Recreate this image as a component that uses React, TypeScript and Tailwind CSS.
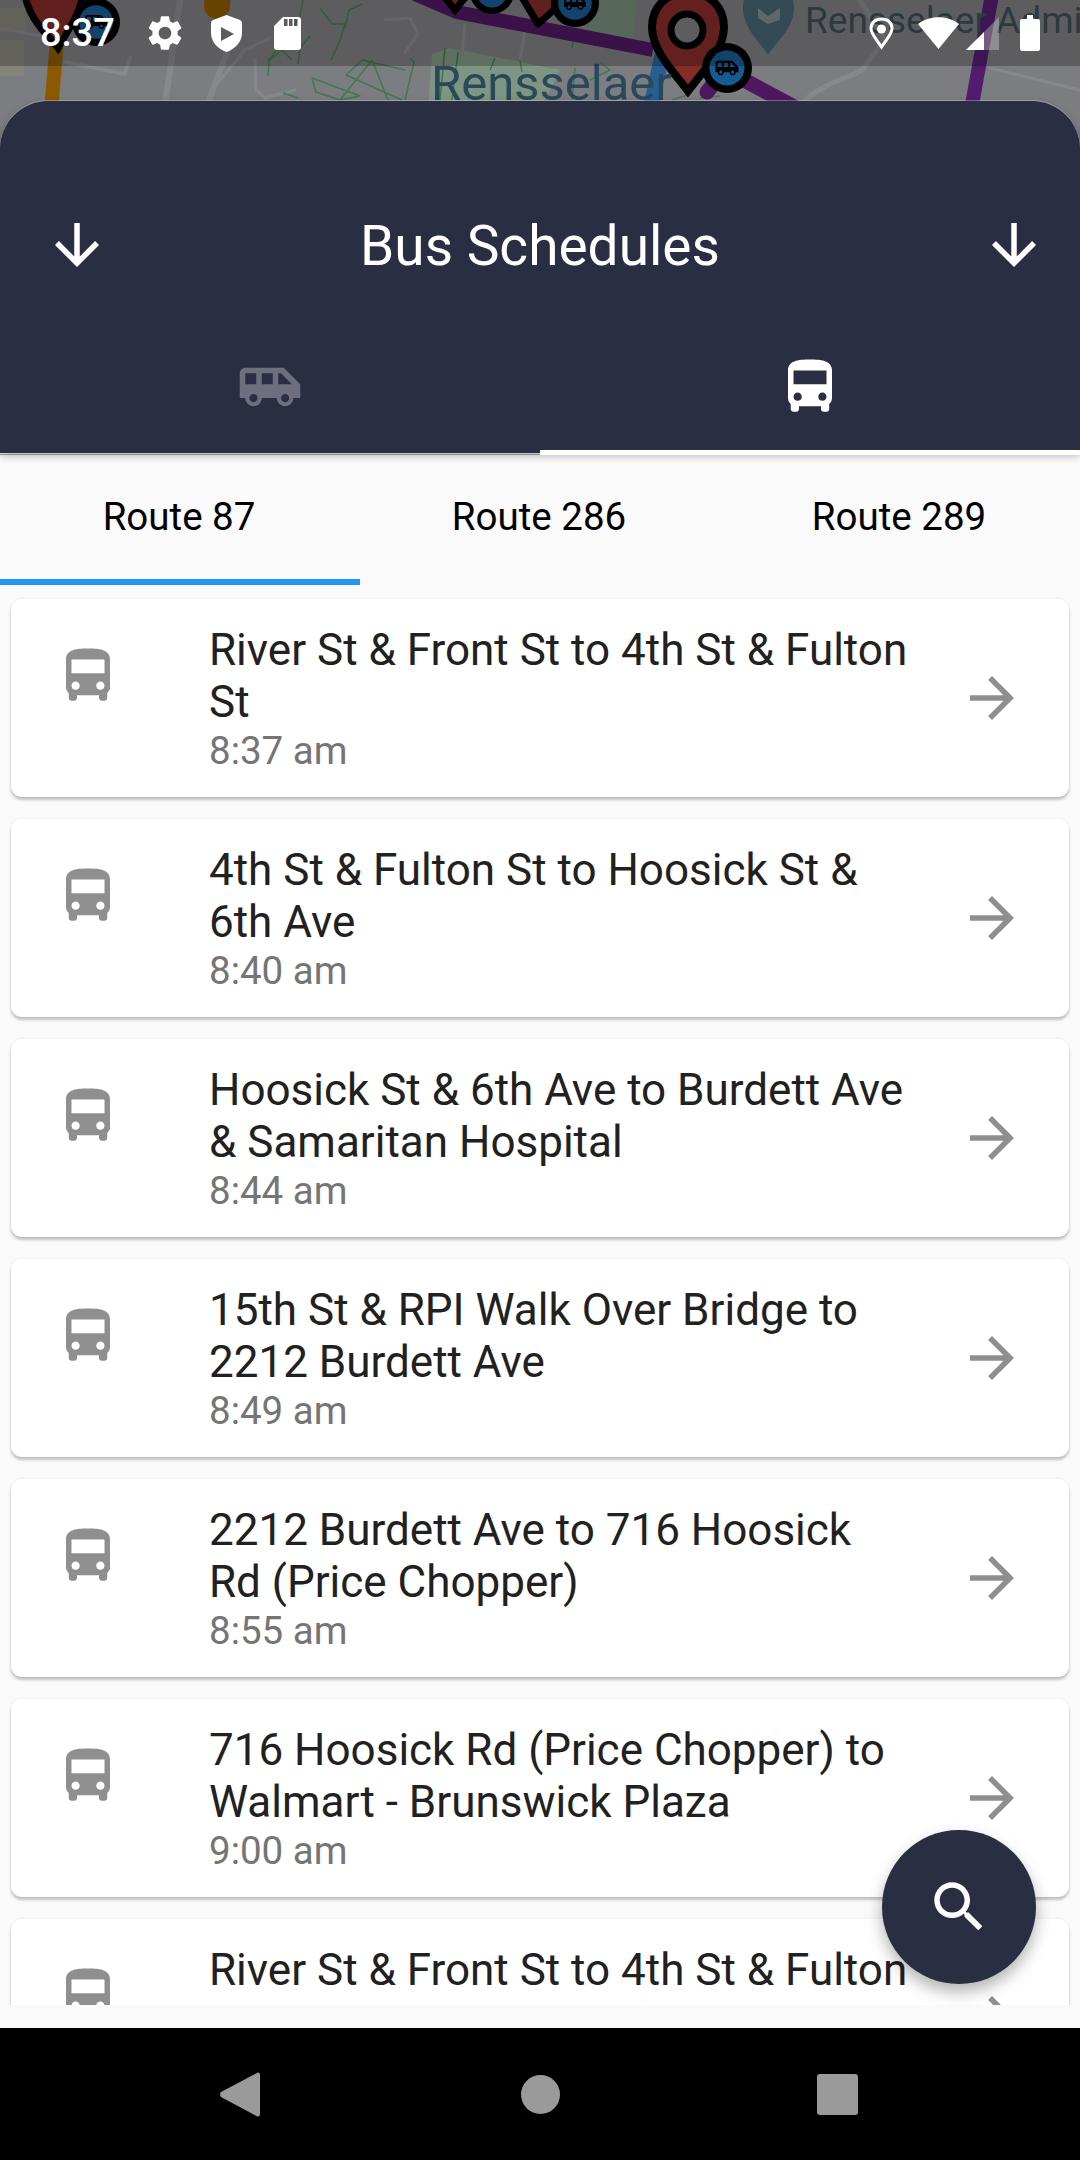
const navy = "bg-[#2a2e43]";

const busPath =
  "M4 16c0 .88.39 1.67 1 2.22V20c0 .55.45 1 1 1h1c.55 0 1-.45 1-1v-1h8v1c0 .55.45 1 1 1h1c.55 0 1-.45 1-1v-1.78c.61-.55 1-1.34 1-2.22V6c0-3.5-3.58-4-8-4s-8 .5-8 4v10zm3.5 1c-.83 0-1.5-.67-1.5-1.5S6.67 14 7.5 14s1.5.67 1.5 1.5S8.33 17 7.5 17zm9 0c-.83 0-1.5-.67-1.5-1.5s.67-1.5 1.5-1.5 1.5.67 1.5 1.5-.67 1.5-1.5 1.5zm1.5-6H6V6h12v5z";
const shuttlePath =
  "M17 5H3c-1.1 0-2 .89-2 2v9h2c0 1.65 1.34 3 3 3s3-1.35 3-3h5.5c0 1.65 1.34 3 3 3s3-1.35 3-3H23v-5l-6-6zM3 11V7h4v4H3zm3 6.5c-.83 0-1.5-.67-1.5-1.5s.67-1.5 1.5-1.5 1.5.67 1.5 1.5-.67 1.5-1.5 1.5zM13 11H9V7h4v4zm4.5 6.5c-.83 0-1.5-.67-1.5-1.5s.67-1.5 1.5-1.5 1.5.67 1.5 1.5-.67 1.5-1.5 1.5zM15 11V7h1l4 4h-5z";
const settingsPath =
  "M19.14 12.94c.04-.3.06-.61.06-.94 0-.32-.02-.64-.07-.94l2.03-1.58c.18-.14.23-.41.12-.61l-1.92-3.32c-.12-.22-.37-.29-.59-.22l-2.39.96c-.5-.38-1.03-.7-1.62-.94l-.36-2.54c-.04-.24-.24-.41-.48-.41h-3.84c-.24 0-.43.17-.47.41l-.36 2.54c-.59.24-1.13.57-1.62.94l-2.39-.96c-.22-.08-.47 0-.59.22L2.74 8.87c-.12.21-.08.47.12.61l2.03 1.58c-.05.3-.09.63-.09.94s.02.64.07.94l-2.03 1.58c-.18.14-.23.41-.12.61l1.92 3.32c.12.22.37.29.59.22l2.39-.96c.5.38 1.03.7 1.62.94l.36 2.54c.05.24.24.41.48.41h3.84c.24 0 .44-.17.47-.41l.36-2.54c.59-.24 1.13-.56 1.62-.94l2.39.96c.22.08.47 0 .59-.22l1.92-3.32c.12-.22.07-.47-.12-.61l-2.01-1.58zM12 15.6c-1.98 0-3.6-1.62-3.6-3.6s1.62-3.6 3.6-3.6 3.6 1.62 3.6 3.6-1.62 3.6-3.6 3.6z";

function Icon(props: { d: string; className: string }) {
  return (
    <svg viewBox="0 0 24 24" className={props.className} fill="currentColor">
      <path d={props.d} />
    </svg>
  );
}

const stops = [
  { title: "River St & Front St to 4th St & Fulton St", time: "8:37 am" },
  { title: "4th St & Fulton St to Hoosick St & 6th Ave", time: "8:40 am" },
  { title: "Hoosick St & 6th Ave to Burdett Ave & Samaritan Hospital", time: "8:44 am" },
  { title: "15th St & RPI Walk Over Bridge to 2212 Burdett Ave", time: "8:49 am" },
  { title: "2212 Burdett Ave to 716 Hoosick Rd (Price Chopper)", time: "8:55 am" },
  { title: "716 Hoosick Rd (Price Chopper) to Walmart - Brunswick Plaza", time: "9:00 am" },
  { title: "River St & Front St to 4th St & Fulton St", time: "9:07 am" },
];

function BusBadge(props: { x: number; y: number; r: number }) {
  const s = props.r / 24;
  return (
    <g>
      <circle cx={props.x} cy={props.y} r={props.r} fill="#000" />
      <circle cx={props.x} cy={props.y} r={props.r * 0.7} fill="#175a92" />
      <g transform={`translate(${props.x - 12 * s}, ${props.y - 12 * s}) scale(${s})`}>
        <path d={shuttlePath} fill="#000" />
      </g>
    </g>
  );
}

function MapBackdrop() {
  return (
    <svg viewBox="0 0 1080 160" className="absolute left-0 top-0 h-[160px] w-[1080px]">
      <rect width="1080" height="160" fill="#7c7d80" />
      <rect x="0" y="8" width="25" height="24" fill="#858478" />
      <rect x="0" y="40" width="24" height="36" fill="#858478" />
      <polygon points="555,0 637,0 632,45 590,34" fill="#748a78" />
      <polygon points="432,54 450,48 560,70 540,110 428,110" fill="#7f9583" />
      <g fill="none" stroke="#87888b" strokeLinecap="round" strokeLinejoin="round">
        <path d="M180 0 L165 105" strokeWidth="6" />
        <path d="M228 50 L207 105" strokeWidth="6" />
        <path d="M66 62 L125 74 L130 58" strokeWidth="4" />
        <path d="M0 28 L30 34 L60 38" strokeWidth="3" />
        <path d="M212 90 L245 50 L270 38" strokeWidth="3" />
        <path d="M255 60 L256 90 L265 98 L295 90" strokeWidth="3" />
        <path d="M385 20 L410 18 L418 34 L405 52" strokeWidth="3" />
        <path d="M465 25 L462 55 M525 30 L520 60" strokeWidth="3" />
        <path d="M800 105 C830 75 860 80 868 62 L885 40 L860 0" strokeWidth="5" />
        <path d="M990 68 L1080 90" strokeWidth="3" />
      </g>
      <g fill="none" stroke="#3f7a4f" strokeWidth="1.5" strokeLinejoin="round">
        <path d="M303 0 L300 15 L290 33 L278 48 L269 60 L268 76" />
        <path d="M270 60 L282 50 L292 60" />
        <path d="M320 8 L332 24 L345 24 L340 40 L331 60" />
        <path d="M362 4 L349 10 L345 28" />
        <path d="M298 64 L300 48 L310 36" />
        <path d="M312 78 L360 96 L340 100 M312 78 L316 92 L340 100 L372 60 L388 100 M346 75 L402 100 M346 75 L362 60 L405 70 M283 93 L298 98" />
        <path d="M410 58 L414 62 L405 100" />
        <path d="M445 48 L440 100 M458 52 L452 100 M495 58 L490 70 M520 60 L522 72 M575 68 L572 100 M600 62 L610 70 L590 80" />
        <path d="M572 48 L573 40" />
        <path d="M672 100 L690 94 M700 98 L720 96" />
      </g>
      <path d="M51 110 L57 40" stroke="#8a5a00" strokeWidth="14" fill="none" />
      <path d="M218 -10 L217 6" stroke="#8a5a00" strokeWidth="26" strokeLinecap="round" fill="none" />
      <path d="M415 -6 L457 12 L653 50" stroke="#4e1860" strokeWidth="14" fill="none" />
      <path d="M662 55 L650 110" stroke="#245f96" strokeWidth="15" fill="none" />
      <path d="M707 92 L725 70 L800 110" stroke="#4e1860" strokeWidth="15" strokeLinecap="round" fill="none" />
      <path d="M992 -5 L971 110" stroke="#521c6e" strokeWidth="14" fill="none" />
      <path
        d="M24 -10 C28 20 48 35 58 48 C68 30 80 15 84 -10 Z"
        fill="#822b27"
        stroke="#000"
        strokeWidth="7"
      />
      <BusBadge x={96} y={22} r={24} />
      <path d="M442 -6 L455 10 L468 -6 Z" fill="#822b27" stroke="#000" strokeWidth="7" />
      <BusBadge x={492} y={-8} r={22} />
      <path d="M520 -6 L538 24 L556 8 L560 -6 Z" fill="#822b27" stroke="#000" strokeWidth="7" strokeLinejoin="round" />
      <BusBadge x={575} y={3} r={24} />
      <path
        d="M688 91 C672 70 652 50 652 27 C652 6 668 -8 688 -8 C708 -8 724 6 724 27 C724 50 704 70 688 91 Z"
        fill="#852b28"
        stroke="#000"
        strokeWidth="8"
      />
      <circle cx="687" cy="30" r="16" fill="#7c7d80" stroke="#000" strokeWidth="7" />
      <BusBadge x={727} y={68} r={25} />
      <path
        d="M768 55 C760 42 743 28 743 8 C743 -10 755 -16 768 -16 C781 -16 794 -10 794 8 C794 28 776 42 768 55 Z"
        fill="#446270"
      />
      <path d="M758 8 L768 16 L780 8 L780 20 L768 24 L758 18 Z" fill="#7c8a90" />
      <text x="431" y="100" fontFamily="Roboto, sans-serif" fontSize="49" fill="#2a485a">
        Rensselaer
      </text>
      <text x="805" y="33" fontFamily="Roboto, sans-serif" fontSize="37" fill="#3a4d56">
        Rensselaer Administration
      </text>
    </svg>
  );
}

function StatusBar() {
  return (
    <div className="absolute left-0 top-0 flex h-[66px] w-[1080px] items-center bg-black/25 pl-[40px] text-white">
      <span className="w-[108px] text-[38px] leading-[66px] font-medium [font-family:Roboto,sans-serif]">8:37</span>
      <Icon d={settingsPath} className="-ml-[4.5px] h-[42px] w-[42px]" />
      <svg viewBox="0 0 31 37" className="ml-[25.5px] h-[37px] w-[31px]" fill="currentColor">
        <path
          fillRule="evenodd"
          d="M15.5 0 L29 5 Q31 6 31 8 V18 C31 27 24 34 15.5 37 C7 34 0 27 0 18 V8 Q0 6 2 5 Z M10 12 L10 26 L23 19 Z"
        />
      </svg>
      <svg viewBox="0 0 27 33" className="ml-[32px] h-[33px] w-[27px]" fill="currentColor">
        <path
          fillRule="evenodd"
          d="M9 0 H24 a3 3 0 0 1 3 3 V30 a3 3 0 0 1 -3 3 H3 a3 3 0 0 1 -3 -3 V9 Z M10 2 V9 H13.5 V2 Z M15 2 V9 H18.5 V2 Z M20 2 V9 H23.5 V2 Z"
        />
      </svg>
      <svg viewBox="0 0 25 33" className="ml-[568px] h-[33px] w-[25px]" fill="none">
        <path
          d="M12.5 30 C8 23 2 17 2 11.5 C2 5.5 6.5 2 12.5 2 C18.5 2 23 5.5 23 11.5 C23 17 17 23 12.5 30 Z"
          stroke="currentColor"
          strokeWidth="3"
        />
        <circle cx="12.5" cy="12" r="4.5" fill="currentColor" />
      </svg>
      <svg viewBox="0 0 41 32" className="ml-[24px] h-[32px] w-[41px]" fill="currentColor">
        <path d="M20.5 32 L0 7 C11 -2 30 -2 41 7 Z" />
      </svg>
      <svg viewBox="0 0 33 33" className="ml-[7px] h-[33px] w-[33px]" fill="currentColor">
        <path d="M0 33 L33 0 V33 Z" opacity="0.3" />
        <path d="M0 33 L18 15 V33 Z" />
      </svg>
      <svg viewBox="0 0 20 36" className="ml-[21px] h-[36px] w-[20px]" fill="currentColor">
        <path d="M7 0 H13 V4 H18 a2 2 0 0 1 2 2 V34 a2 2 0 0 1 -2 2 H2 a2 2 0 0 1 -2 -2 V6 a2 2 0 0 1 2 -2 H7 Z" />
      </svg>
    </div>
  );
}

function SheetHeader() {
  const arrowDown = "M20 12l-1.41-1.41L13 16.17V4h-2v12.17l-5.58-5.59L4 12l8 8 8-8z";
  return (
    <div
      className={`relative z-10 h-[352px] rounded-t-[48px] ${navy} text-white shadow-[0_-1px_0_rgba(255,255,255,0.3),0_3px_8px_rgba(0,0,0,0.28)]`}
    >
      <div className="grid grid-cols-[1fr_auto_1fr] items-center pl-[44px] pr-[33px] pt-[110px]">
        <Icon d={arrowDown} className="h-[66px] w-[66px]" />
        <span className="mr-[11px] pt-[2px] text-[55px] leading-[66px] [font-family:Roboto,sans-serif]">
          Bus Schedules
        </span>
        <Icon d={arrowDown} className="h-[66px] w-[66px] justify-self-end" />
      </div>
      <div className="grid grid-cols-2">
        <div className="flex h-[176px] justify-center border-b border-[#8d8e9c] pt-[74.5px] text-[#6d6f7e]">
          <Icon d={shuttlePath} className="h-[66px] w-[66px]" />
        </div>
        <div className="flex h-[176px] justify-center border-b-[5px] border-white pt-[74.5px]">
          <Icon d={busPath} className="h-[66px] w-[66px]" />
        </div>
      </div>
    </div>
  );
}

function RouteTabs() {
  return (
    <div className="grid grid-cols-3 text-[38.5px] text-black [font-family:Roboto,sans-serif]">
      <div className="flex h-[132px] items-center justify-center border-b-[6px] border-[#2196f3] pr-[2px] pt-[2px]">
        Route 87
      </div>
      <div className="flex h-[132px] items-center justify-center border-b-[6px] border-transparent pr-[2px] pt-[2px]">
        Route 286
      </div>
      <div className="flex h-[132px] items-center justify-center border-b-[6px] border-transparent pr-[2px] pt-[2px]">
        Route 289
      </div>
    </div>
  );
}

function StopCard(props: { title: string; time: string }) {
  return (
    <div className="flex h-[198px] shrink-0 items-center rounded-[11px] bg-white pl-[44px] shadow-[0_3px_3px_rgba(0,0,0,0.22),0_0_3px_rgba(0,0,0,0.08)]">
      <Icon d={busPath} className="mt-[-45px] h-[66px] w-[66px] shrink-0 text-[#8f8f8f]" />
      <div className="ml-[88px] w-[700px] shrink-0 [font-family:Roboto,sans-serif]">
        <div className="text-[44px] leading-[52px] text-[#212121]">{props.title}</div>
        <div className="text-[38.5px] leading-[45px] text-[#757575]">{props.time}</div>
      </div>
      <Icon
        d="M12 4l-1.41 1.41L16.17 11H4v2h12.17l-5.58 5.59L12 20l8-8z"
        className="ml-[49.5px] h-[66px] w-[66px] shrink-0 text-[#8f8f8f]"
      />
    </div>
  );
}

function NavBar() {
  return (
    <div className="flex h-[132px] items-center bg-black pl-[220px]">
      <svg viewBox="0 0 40 45" className="h-[45px] w-[40px]" fill="#9a9a9a">
        <path d="M38 0.5 Q40 0 40 3 V42 Q40 45 37.5 44.5 L1 25 Q-1 22.5 1 20 Z" />
      </svg>
      <div className="ml-[261px] h-[39px] w-[39px] rounded-full bg-[#9a9a9a]" />
      <div className="ml-[257px] h-[41px] w-[41px] rounded-[3px] bg-[#9a9a9a]" />
    </div>
  );
}

export default function App() {
  return (
    <div className="relative h-[2160px] w-[1080px] overflow-hidden bg-[#fafafa]">
      <MapBackdrop />
      <StatusBar />
      <div className="relative pt-[101px]">
        <SheetHeader />
        <RouteTabs />
        <div className="flex h-[1420px] flex-col gap-[22px] overflow-hidden px-[11px] pt-[14px]">
          {stops.map((s, i) => (
            <StopCard key={i} title={s.title} time={s.time} />
          ))}
        </div>
        <div className="h-[23px]" />
        <NavBar />
      </div>
      <button
        className={`absolute bottom-[176px] right-[44px] flex h-[154px] w-[154px] items-center justify-center rounded-full ${navy} text-white shadow-[0_8px_16px_rgba(0,0,0,0.3)]`}
      >
        <Icon
          d="M15.5 14h-.79l-.28-.27C15.41 12.59 16 11.11 16 9.5 16 5.91 13.09 3 9.5 3S3 5.91 3 9.5 5.91 16 9.5 16c1.61 0 3.09-.59 4.23-1.57l.27.28v.79l5 4.99L20.49 19l-4.99-5zm-6 0C7.01 14 5 11.99 5 9.5S7.01 5 9.5 5 14 7.01 14 9.5 11.99 14 9.5 14z"
          className="h-[66px] w-[66px]"
        />
      </button>
    </div>
  );
}
